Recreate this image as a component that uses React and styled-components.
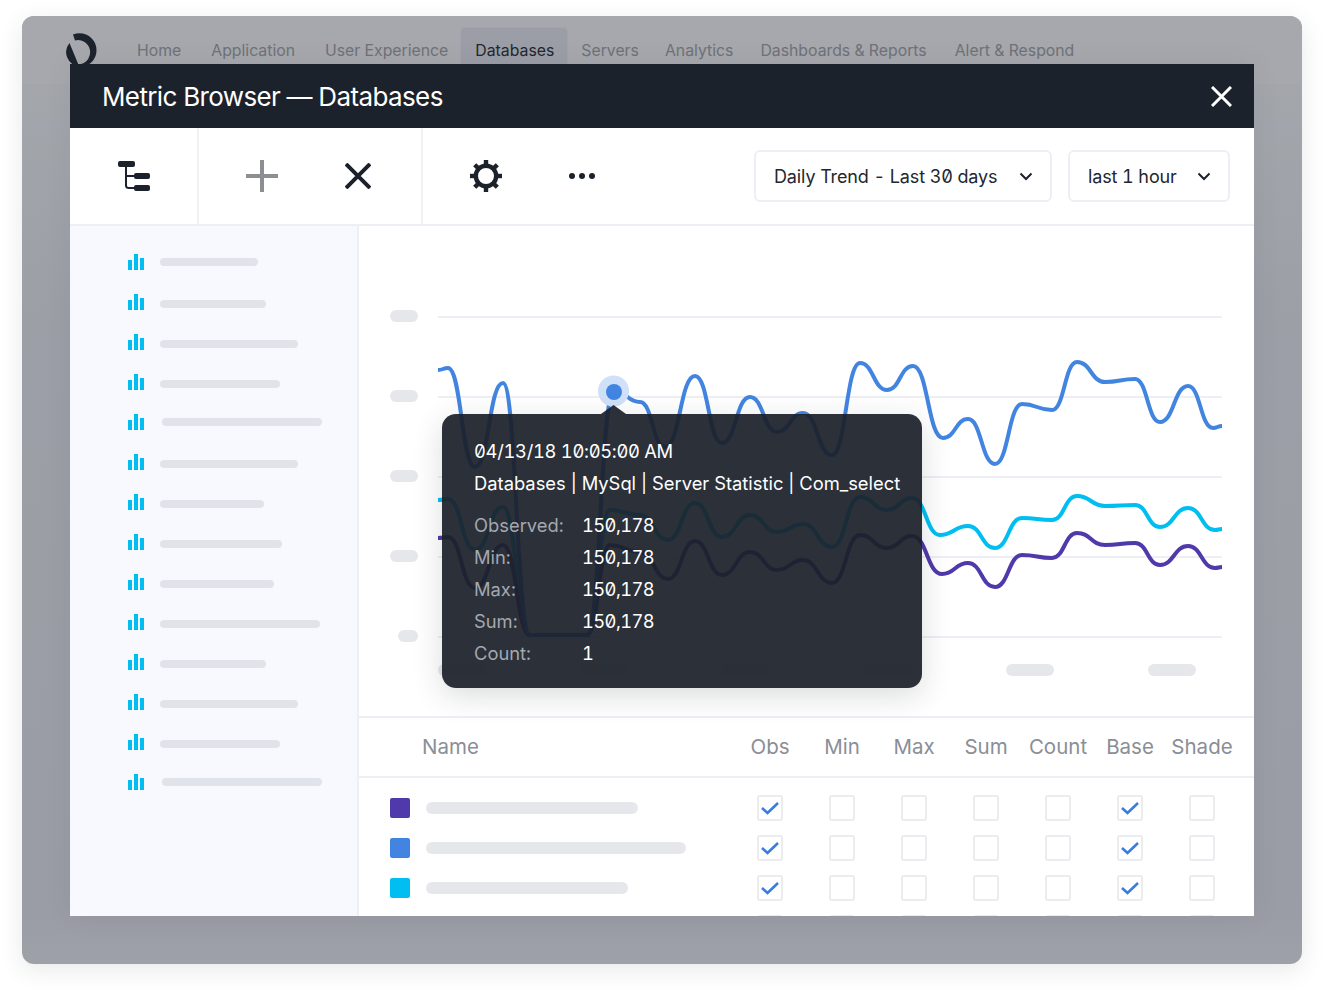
import styled, { createGlobalStyle } from 'styled-components';

const GlobalStyle = createGlobalStyle`
  html, body {
    margin: 0;
    background: #fff;
  }
  body {
    font-family: Inter, "Noto Sans", sans-serif;
    font-feature-settings: "zero", "tnum";
  }
`;

const NAV_ITEMS = [
  { label: 'Home', nudge: 0 },
  { label: 'Application', nudge: 2 },
  { label: 'User Experience', nudge: 2 },
  { label: 'Databases', nudge: -2, active: true },
  { label: 'Servers', nudge: -1 },
  { label: 'Analytics', nudge: -2 },
  { label: 'Dashboards & Reports', nudge: -1 },
  { label: 'Alert & Respond', nudge: 0 },
];
const SIDEBAR_ROWS = [
  { width: 98 }, { width: 106, low: true }, { width: 138, low: true }, { width: 120, low: true }, { width: 160, shifted: true },
  { width: 138, low: true }, { width: 104, low: true }, { width: 122, low: true }, { width: 114, low: true }, { width: 160, low: true },
  { width: 106, low: true }, { width: 138, low: true }, { width: 120, low: true }, { width: 160, shifted: true },
];
const COLUMNS = ['Obs', 'Min', 'Max', 'Sum', 'Count', 'Base', 'Shade'];
const TABLE_ROWS = [
  { color: '#4f39ab', width: 212 },
  { color: '#4285e0', width: 260 },
  { color: '#00bff0', width: 202 },
  { color: '#e6e7eb', width: 180 },
];
const STATS = [['Observed:', '150,178'], ['Min:', '150,178'], ['Max:', '150,178'], ['Sum:', '150,178'], ['Count:', '1']];

const RIGHT_BLUE = [[860, 363], [887, 390], [913, 366], [943, 438], [968, 419], [995, 464], [1022, 404], [1052, 410], [1077, 362], [1105, 382], [1135, 379], [1160, 422], [1188, 386], [1213, 428], [1222, 426]];
const RIGHT_CYAN = [[860, 497], [887, 510], [912, 498], [940, 535], [968, 526], [995, 548], [1022, 518], [1052, 520], [1077, 496], [1105, 506], [1135, 505], [1160, 527], [1188, 508], [1215, 530], [1222, 529]];
const RIGHT_PURPLE = [[860, 535], [887, 548], [912, 536], [942, 574], [968, 563], [995, 587], [1022, 555], [1052, 558], [1077, 533], [1105, 545], [1135, 543], [1160, 565], [1188, 546], [1215, 568], [1222, 567]];

const SERIES = [
  {
    color: '#00bff0',
    points: [[438, 500], [448, 499], [475, 550], [503, 507], [530, 635], [587, 635], [610, 510], [640, 515], [668, 540], [695, 503], [722, 537], [750, 515], [777, 532], [803, 524], [832, 547], ...RIGHT_CYAN],
  },
  {
    color: '#4f39ab',
    points: [[438, 538], [448, 537], [475, 588], [503, 545], [530, 635], [587, 635], [610, 545], [640, 552], [668, 579], [695, 541], [722, 575], [750, 552], [777, 570], [803, 560], [832, 583], ...RIGHT_PURPLE],
  },
  {
    color: '#4285e0',
    points: [[438, 370], [448, 368], [475, 467], [503, 383], [530, 635], [587, 635], [614, 391], [640, 402], [665, 447], [695, 376], [722, 443], [750, 397], [777, 432], [803, 413], [832, 455], ...RIGHT_BLUE],
  },
];

// flat tangent at every point, the data is nearly all peaks and troughs
const toPath = (points) =>
  points.reduce((d, [x, y], i) => {
    if (i === 0) return `M${x} ${y}`;
    const [px, py] = points[i - 1];
    const mid = (x - px) * 0.5;
    return `${d} C${px + mid} ${py} ${x - mid} ${y} ${x} ${y}`;
  }, '');

const Logo = () => (
  <LogoMark viewBox="66 33 32 34" width="32" height="34">
    <path d="M73 34.5 A16 16 0 0 1 86 66 L81 64 A10 10 0 0 0 75 40.5 Z" fill="#1d232d" />
    <path d="M69.5 43 A14 14 0 0 0 79 66 Z" fill="#1d232d" />
  </LogoMark>
);

const TreeIcon = () => (
  <svg width="32" height="30" viewBox="118 162 32 30">
    <path d="M126 166V186.5Q126 189 129 189H136M126 177H136" fill="none" stroke="#1b222c" strokeWidth="2" />
    <rect x="118" y="162" width="17" height="6" rx="2" fill="#1b222c" />
    <rect x="134" y="174" width="16" height="6" rx="2" fill="#1b222c" />
    <rect x="134" y="186" width="16" height="6" rx="2" fill="#1b222c" />
  </svg>
);

const PlusIcon = () => (
  <svg width="32" height="32" viewBox="0 0 32 32">
    <path d="M16 0V32M0 16H32" stroke="#8b8e93" strokeWidth="4" />
  </svg>
);

const CrossIcon = ({ size = 26, weight = 4, color = '#1b222c' }) => (
  <svg width={size} height={size} viewBox={`0 0 ${size} ${size}`}>
    <path d={`M1 1L${size - 1} ${size - 1}M${size - 1} 1L1 ${size - 1}`} stroke={color} strokeWidth={weight} />
  </svg>
);

const GearIcon = () => (
  <svg width="32" height="32" viewBox="-16 -16 32 32">
    <circle r="10.2" fill="none" stroke="#1b222c" strokeWidth="4.4" />
    {[0, 45, 90, 135, 180, 225, 270, 315].map((angle) => (
      <rect key={angle} x="-2.2" y="-16" width="4.4" height="6" fill="#1b222c" transform={`rotate(${angle})`} />
    ))}
  </svg>
);

const DotsIcon = () => (
  <svg width="28" height="8" viewBox="0 0 28 8">
    <circle cx="4" cy="4" r="3" fill="#1b222c" />
    <circle cx="14" cy="4" r="3" fill="#1b222c" />
    <circle cx="24" cy="4" r="3" fill="#1b222c" />
  </svg>
);

const Chevron = () => (
  <svg width="14" height="9" viewBox="0 0 14 9">
    <path d="M1.5 1.5L7 7L12.5 1.5" fill="none" stroke="#1b222c" strokeWidth="2" />
  </svg>
);

const BarsIcon = () => (
  <svg width="17" height="16" viewBox="0 0 17 16">
    <rect x="0" y="6" width="4" height="10" fill="#00bff0" />
    <rect x="6" y="0" width="4" height="16" fill="#00bff0" />
    <rect x="12" y="4" width="4" height="12" fill="#00bff0" />
  </svg>
);

const CheckMark = () => (
  <svg width="18" height="14" viewBox="0 0 18 14">
    <path d="M1 7L6.5 12L17 2" fill="none" stroke="#3a7de0" strokeWidth="2.6" />
  </svg>
);

const Chart = () => (
  <ChartSvg viewBox="360 226 894 490" width="894" height="490">
    {[316, 396, 476, 556, 636].map((y) => (
      <rect key={y} x="438" y={y} width="784" height="2" fill="#eeeff4" />
    ))}
    {[310, 390, 470, 550].map((y) => (
      <rect key={y} x="390" y={y} width="28" height="12" rx="6" fill="#e6e7eb" />
    ))}
    <rect x="398" y="630" width="20" height="12" rx="6" fill="#e6e7eb" />
    {[438, 580, 722, 864, 1006, 1148].map((x) => (
      <rect key={x} x={x} y="664" width="48" height="12" rx="6" fill="#e6e7eb" />
    ))}
    {SERIES.map((line) => (
      <path key={line.color} d={toPath(line.points)} fill="none" stroke={line.color} strokeWidth="4" />
    ))}
    <circle cx="613.5" cy="391" r="15.5" fill="#cfe0f8" />
    <circle cx="614" cy="392" r="8" fill="#4285e0" />
  </ChartSvg>
);

const App = () => {
  return (
    <Page>
      <GlobalStyle />
      <Backdrop>
        <Nav>
          <Logo />
          <NavList>
            {NAV_ITEMS.map((item) => (
              <NavItem key={item.label} $active={item.active} $nudge={item.nudge}>{item.label}</NavItem>
            ))}
          </NavList>
        </Nav>
        <Modal>
          <ModalHeader>
            <Title>Metric Browser — Databases</Title>
            <CrossIcon size={21} weight={3} color="#fff" />
          </ModalHeader>
          <Toolbar>
            <ToolGroup $first><TreeIcon /></ToolGroup>
            <ToolGroup>
              <ToolButton><PlusIcon /></ToolButton>
              <ToolButton><CrossIcon /></ToolButton>
            </ToolGroup>
            <ToolGroup $plain>
              <ToolButton><GearIcon /></ToolButton>
              <ToolButton><DotsIcon /></ToolButton>
            </ToolGroup>
            <Selects>
              <Select $width={298}>Daily Trend - Last 30 days<Chevron /></Select>
              <Select $width={162}>last 1 hour<Chevron /></Select>
            </Selects>
          </Toolbar>
          <Body>
            <Sidebar>
              {SIDEBAR_ROWS.map((row, i) => (
                <SidebarRow key={i}>
                  <BarsIcon />
                  <SidebarBar $width={row.width} $shifted={row.shifted} $low={row.low} />
                </SidebarRow>
              ))}
            </Sidebar>
            <Main>
              <ChartArea>
                <Chart />
                <Tooltip>
                  <DateLine>04/13/18 10:05:00 AM</DateLine>
                  <TooltipLine>Databases | MySql | Server Statistic | Com_select</TooltipLine>
                  <StatList>
                    {STATS.map(([label, value]) => (
                      <StatRow key={label}>
                        <StatLabel>{label}</StatLabel>
                        <StatValue>{value}</StatValue>
                      </StatRow>
                    ))}
                  </StatList>
                </Tooltip>
              </ChartArea>
              <TableHead>
                <NameHead>Name</NameHead>
                {COLUMNS.map((col) => <ColHead key={col}>{col}</ColHead>)}
              </TableHead>
              <TableBody>
                {TABLE_ROWS.map((row) => (
                  <TableRow key={row.width}>
                    <NameCell>
                      <Swatch $color={row.color} />
                      <NameBar $width={row.width} />
                    </NameCell>
                    {COLUMNS.map((col) => (
                      <CheckCell key={col}>
                        <CheckBox>{(col === 'Obs' || col === 'Base') && <CheckMark />}</CheckBox>
                      </CheckCell>
                    ))}
                  </TableRow>
                ))}
              </TableBody>
            </Main>
          </Body>
        </Modal>
      </Backdrop>
    </Page>
  );
};

const Page = styled.div`
  padding: 16px 22px 28px;
  width: 1280px;
  height: 948px;
`;

const Backdrop = styled.div`
  position: relative;
  width: 1280px;
  height: 948px;
  border-radius: 12px;
  background: linear-gradient(#a3a6ab 68px, #9c9fa6 300px, #9a9da5 900px, #9ea1a8);
  box-shadow: 0 6px 24px rgba(30, 35, 45, 0.1);
  overflow: hidden;
`;

const Nav = styled.div`
  display: flex;
  align-items: flex-start;
  height: 68px;
  background: #a6a8ad;
  padding: 11px 0 0 44px;
  box-sizing: border-box;
`;

const LogoMark = styled.svg`
  flex: none;
  margin-top: 6px;
`;

const NavList = styled.div`
  display: flex;
  margin-left: 25px;
`;

const NavItem = styled.div`
  height: 57px;
  padding: ${(p) => (p.$active ? '13px 14px 0 15px' : '13px 14px 0')};
  margin-left: ${(p) => p.$nudge}px;
  box-sizing: border-box;
  font-size: 15.8px;
  line-height: 22px;
  color: ${(p) => (p.$active ? '#23272e' : '#6f7278')};
  background: ${(p) => (p.$active ? '#9b9ea6' : 'transparent')};
  border-radius: 5px 5px 0 0;
  box-shadow: ${(p) => (p.$active ? 'inset 0 0 0 1px #a2a5ac' : 'none')};
`;

const Modal = styled.div`
  position: absolute;
  left: 48px;
  top: 48px;
  width: 1184px;
  height: 852px;
  background: #fff;
  overflow: hidden;
  box-shadow: 0 0 30px rgba(30, 35, 45, 0.06);
`;

const ModalHeader = styled.div`
  display: flex;
  align-items: center;
  justify-content: space-between;
  height: 64px;
  padding: 0 22px 0 32px;
  background: #1b222c;
`;

const Title = styled.div`
  font-size: 26px;
  letter-spacing: -0.62px;
  color: #fff;
`;

const Toolbar = styled.div`
  display: flex;
  height: 98px;
  box-sizing: border-box;
  border-bottom: 2px solid #eeeff4;
`;

const ToolGroup = styled.div`
  display: flex;
  align-items: center;
  justify-content: ${(p) => (p.$first ? 'center' : 'flex-start')};
  width: ${(p) => (p.$first ? '129px' : 'auto')};
  padding: ${(p) => (p.$first ? '0 0 0 1px' : '0 15px')};
  box-sizing: border-box;
  border-right: ${(p) => (p.$plain ? 'none' : '2px solid #f0f1f5')};
`;

const ToolButton = styled.div`
  display: flex;
  align-items: center;
  justify-content: center;
  width: 96px;
`;

const Selects = styled.div`
  display: flex;
  align-items: center;
  gap: 16px;
  margin-left: auto;
  padding-right: 24px;
`;

const Select = styled.div`
  display: flex;
  align-items: center;
  justify-content: space-between;
  width: ${(p) => p.$width}px;
  height: 52px;
  padding: 0 17px 0 18px;
  box-sizing: border-box;
  border: 2px solid #eeeff4;
  border-radius: 6px;
  font-size: 18px;
  letter-spacing: -0.12px;
  color: #23272e;
`;

const Body = styled.div`
  display: flex;
  height: 690px;
`;

const Sidebar = styled.div`
  flex: none;
  width: 289px;
  box-sizing: border-box;
  padding-top: 16px;
  background: #f7f9fe;
  border-right: 2px solid #eeeff4;
`;

const SidebarRow = styled.div`
  display: flex;
  align-items: center;
  gap: 15px;
  height: 40px;
  padding-left: 58px;
`;

const SidebarBar = styled.div`
  width: ${(p) => p.$width}px;
  height: 8px;
  margin-left: ${(p) => (p.$shifted ? '2px' : '0')};
  margin-top: ${(p) => (p.$low ? '4px' : '0')};
  border-radius: 4px;
  background: #e1e3ea;
`;

const Main = styled.div`
  flex: 1;
  min-width: 0;
`;

const ChartArea = styled.div`
  position: relative;
  height: 492px;
  padding-left: 1px;
  box-sizing: border-box;
  border-bottom: 2px solid #eeeff4;
`;

const ChartSvg = styled.svg`
  display: block;
`;

const Tooltip = styled.div`
  position: absolute;
  left: 83px;
  top: 188px;
  width: 480px;
  height: 274px;
  padding: 21px 0 0 32px;
  box-sizing: border-box;
  border-radius: 14px;
  background: rgba(27, 32, 42, 0.93);
  box-shadow: 0 8px 30px rgba(30, 35, 45, 0.16);
  color: #fff;
  font-size: 18.35px;
  line-height: 32px;

  &::before {
    content: '';
    position: absolute;
    left: 159px;
    top: -9px;
    width: 25px;
    height: 9px;
    background: rgba(27, 32, 42, 0.93);
    clip-path: polygon(50% 0, 100% 100%, 0 100%);
  }
`;

const TooltipLine = styled.div`
  white-space: nowrap;
`;

const DateLine = styled(TooltipLine)`
  letter-spacing: -0.3px;
`;

const StatList = styled.div`
  margin-top: 10px;
`;

const StatRow = styled.div`
  display: flex;
`;

const StatLabel = styled.span`
  width: 108px;
  color: #a4a8b0;
`;

const StatValue = styled.span`
  letter-spacing: -0.6px;
`;

const TableHead = styled.div`
  display: grid;
  grid-template-columns: 375px repeat(7, 72px);
  align-items: center;
  height: 60px;
  padding-bottom: 2px;
  box-sizing: border-box;
  border-bottom: 2px solid #eeeff4;
  font-size: 20.5px;
  color: #8a8e96;
`;

const NameHead = styled.div`
  padding-left: 63px;
`;

const ColHead = styled.div`
  text-align: center;
`;

const TableBody = styled.div`
  padding-top: 10px;
`;

const TableRow = styled.div`
  display: grid;
  grid-template-columns: 375px repeat(7, 72px);
  align-items: center;
  height: 40px;
`;

const NameCell = styled.div`
  display: flex;
  align-items: center;
  gap: 16px;
  padding-left: 31px;
`;

const Swatch = styled.div`
  width: 20px;
  height: 20px;
  border-radius: 2px;
  background: ${(p) => p.$color};
`;

const NameBar = styled.div`
  width: ${(p) => p.$width}px;
  height: 12px;
  border-radius: 6px;
  background: #e6e7eb;
`;

const CheckCell = styled.div`
  display: flex;
  justify-content: center;
`;

const CheckBox = styled.div`
  display: flex;
  align-items: center;
  justify-content: center;
  width: 26px;
  height: 26px;
  box-sizing: border-box;
  border: 2px solid #ebecef;
  border-radius: 3px;
`;

export default App;
